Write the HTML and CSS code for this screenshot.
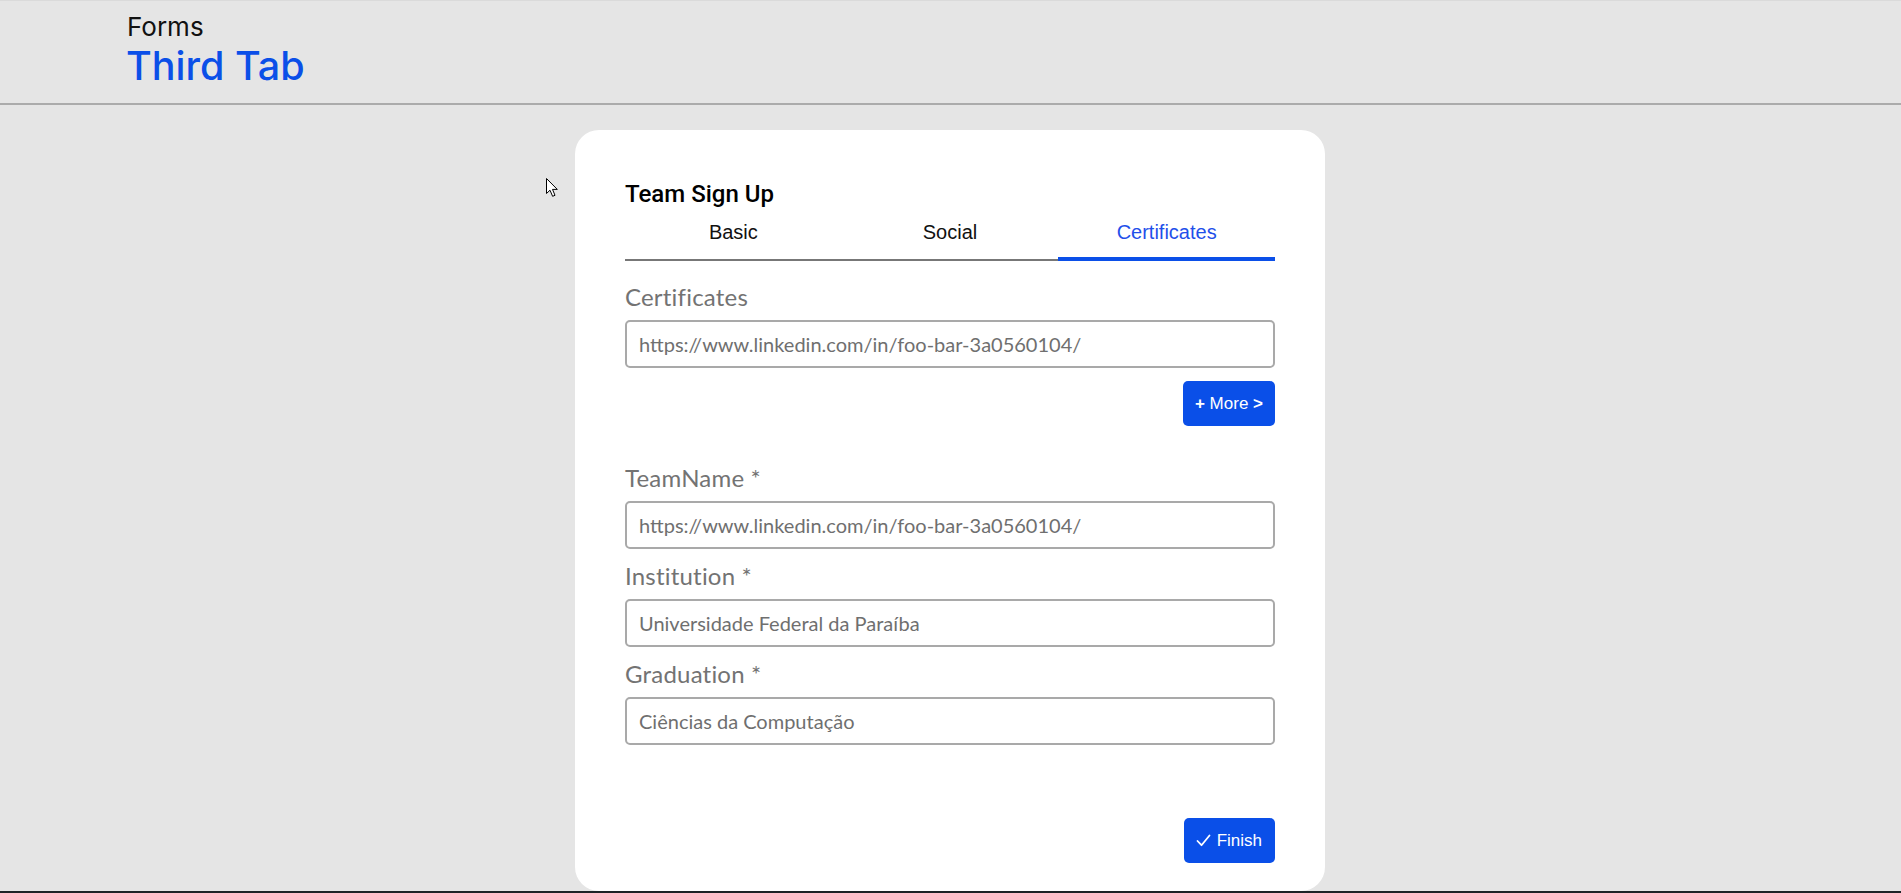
FILE: index.html
```html
<!DOCTYPE html>
<html lang="en">
<head>
<meta charset="utf-8">
<title>Forms - Third Tab</title>
<link rel="stylesheet" href="styles.css">
</head>
<body>
<header class="page-header">
  <div class="crumb">Forms</div>
  <h1 class="page-title">Third Tab</h1>
</header>
<main class="page-main">
  <section class="card">
    <h2 class="card-title">Team Sign Up</h2>
    <nav class="tabs">
      <div class="tab">Basic</div>
      <div class="tab">Social</div>
      <div class="tab tab-active">Certificates</div>
    </nav>
    <form class="form">
      <div class="field">
        <label class="label">Certificates</label>
        <div class="input">https://www.linkedin.com/in/foo-bar-3a0560104/</div>
      </div>
      <div class="row-end more-row">
        <button type="button" class="btn"><span class="btn-text"><b>+</b> More <b>&gt;</b></span></button>
      </div>
      <div class="field field-team">
        <label class="label">TeamName *</label>
        <div class="input">https://www.linkedin.com/in/foo-bar-3a0560104/</div>
      </div>
      <div class="field">
        <label class="label">Institution *</label>
        <div class="input">Universidade Federal da Paraíba</div>
      </div>
      <div class="field">
        <label class="label">Graduation *</label>
        <div class="input">Ciências da Computação</div>
      </div>
      <div class="row-end finish-row">
        <button type="button" class="btn btn-finish"><svg class="check" width="15" height="13" viewBox="0 0 15 13"><polyline points="1.5,7 5.5,11.2 13.5,1.5" fill="none" stroke="#fff" stroke-width="1.8" stroke-linecap="round" stroke-linejoin="round"/></svg><span class="btn-text">Finish</span></button>
      </div>
    </form>
  </section>
  <svg class="cursor" width="13" height="20" viewBox="0 0 13 20"><path d="M0.5 0.5 L0.5 15.5 L4 12.2 L6.6 18.3 L9 17.3 L6.5 11.4 L11.3 11.4 Z" fill="#fff" stroke="#000" stroke-width="1" stroke-linejoin="round"/></svg>
</main>
<div class="screen-edge"></div>
</body>
</html>
```

FILE: styles.css
```css
html, body {
  margin: 0;
  padding: 0;
}
body {
  background: #e5e5e5;
  font-family: "Liberation Sans", Arial, sans-serif;
  height: 893px;
  overflow: hidden;
  display: flex;
  flex-direction: column;
}
.page-header {
  border-top: 1px solid #dadada;
  border-bottom: 2px solid #ababab;
  padding: 10px 0 13px 127px;
  font-family: Inter, "Liberation Sans", sans-serif;
}
.crumb {
  font-size: 26px;
  line-height: normal;
  color: #111;
}
.page-title {
  margin: 0 0 0 -1px;
  font-size: 39.5px;
  line-height: normal;
  font-weight: 500;
  color: #0b4fe8;
}
.page-main {
  position: relative;
  flex: 1;
  display: flex;
  justify-content: center;
  align-items: flex-start;
  padding-top: 25px;
}
.card {
  width: 650px;
  background: #fff;
  border-radius: 24px;
  padding: 50px 50px 28px;
  margin-right: 1px;
}
.card-title {
  margin: 0;
  font-family: Roboto, "Liberation Sans", sans-serif;
  font-weight: 500;
  font-size: 24px;
  line-height: 28px;
  color: #000;
}
.tabs {
  display: grid;
  grid-template-columns: 1fr 1fr 1fr;
}
.tab {
  text-align: center;
  font-size: 20px;
  line-height: 23px;
  padding: 13px 0 15px;
  border-bottom: 2px solid #777;
  color: #111;
}
.tab-active {
  color: #1f50ea;
  padding-bottom: 13px;
  border-bottom: 4px solid #0b4fe8;
}
.form {
  margin-top: 19px;
}
.field + .field {
  margin-top: 10px;
}
.field-team {
  margin-top: 35px;
}
.label {
  display: block;
  font-family: Lato, "Open Sans", sans-serif;
  font-size: 24px;
  letter-spacing: 0.2px;
  line-height: 34px;
  color: #737373;
  margin-bottom: 6px;
}
.input {
  box-sizing: border-box;
  height: 48px;
  border: 2px solid #a9a9a9;
  border-radius: 5px;
  padding: 0 12px 1px;
  display: flex;
  align-items: center;
  font-family: Lato, "Open Sans", sans-serif;
  font-size: 20px;
  color: #6f6f6f;
}
.row-end {
  display: flex;
  justify-content: flex-end;
}
.more-row {
  margin-top: 13px;
}
.finish-row {
  margin-top: 73px;
}
.btn {
  height: 45px;
  border: none;
  border-radius: 5px;
  background: #0a4fe8;
  color: #fff;
  font-family: "Liberation Sans", Arial, sans-serif;
  font-size: 17px;
  padding: 0 12px;
  display: inline-flex;
  align-items: center;
}
.btn-text b {
  font-weight: bold;
}
.btn-finish {
  padding: 0 13px 0 12px;
}
.check {
  margin-right: 6px;
}
.cursor {
  position: absolute;
  left: 546px;
  top: 73px;
}
.screen-edge {
  height: 2px;
  background: #1e2327;
  flex: none;
}
```
